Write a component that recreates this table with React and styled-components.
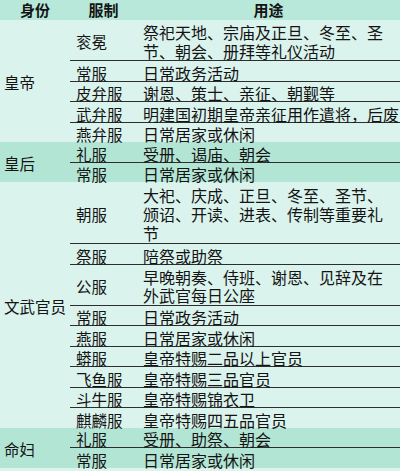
import styled, { createGlobalStyle } from 'styled-components';

const GlobalStyle = createGlobalStyle`
  html, body {
    margin: 0;
    padding: 0;
    background: #dcf3ee;
  }
  body {
    font-family: "Noto Sans CJK SC", "Noto Sans", sans-serif;
    color: #141414;
  }
`;

const Table = styled.div`
  width: 400px;
  height: 471px;
  overflow: hidden;
`;

const Header = styled.div`
  display: grid;
  grid-template-columns: 70px 67px 1fr;
  height: 20px;
  background: #b8e8d9;
  font-size: 15px;
  font-weight: 700;
  line-height: 20px;
  text-align: center;
`;

const Group = styled.div`
  display: flex;
  background: ${(p) => (p.$dark ? '#b3e5d5' : '#dbf3ed')};
`;

const Label = styled.div`
  width: 70px;
  flex-shrink: 0;
  display: flex;
  align-items: center;
  padding: 2px 0 0 4px;
  box-sizing: border-box;
  font-size: 15.5px;
  white-space: nowrap;
`;

const Rows = styled.div`
  flex: 1;
  min-width: 0;
`;

// row spacing per number of text lines, measured from the reference
const spacing = {
  1: { lh: 16, pt: 3.5 },
  2: { lh: 18.5, pt: 3 },
  3: { lh: 19, pt: 4 },
};

const Row = styled.div`
  display: grid;
  grid-template-columns: 67px 1fr;
  border-bottom: 1px solid #2e2e2e;
  padding-top: ${(p) => spacing[p.$lines].pt}px;
  line-height: ${(p) => spacing[p.$lines].lh}px;

  &:last-child {
    border-bottom: none;
  }
`;

const Kind = styled.div`
  display: flex;
  align-items: center;
  padding-left: 6px;
  font-size: 15.5px;
  white-space: nowrap;
`;

const Use = styled.div`
  padding-left: 6px;
  font-size: 16px;
  white-space: nowrap;
`;

const data = [
  {
    who: '皇帝',
    rows: [
      ['衮冕', ['祭祀天地、宗庙及正旦、冬至、圣', '节、朝会、册拜等礼仪活动']],
      ['常服', ['日常政务活动']],
      ['皮弁服', ['谢恩、策士、亲征、朝觐等']],
      ['武弁服', ['明建国初期皇帝亲征用作遣将，后废']],
      ['燕弁服', ['日常居家或休闲']],
    ],
  },
  {
    who: '皇后',
    dark: true,
    rows: [
      ['礼服', ['受册、谒庙、朝会']],
      ['常服', ['日常居家或休闲']],
    ],
  },
  {
    who: '文武官员',
    rows: [
      ['朝服', ['大祀、庆成、正旦、冬至、圣节、', '颁诏、开读、进表、传制等重要礼', '节']],
      ['祭服', ['陪祭或助祭']],
      ['公服', ['早晚朝奏、侍班、谢恩、见辞及在', '外武官每日公座']],
      ['常服', ['日常政务活动']],
      ['燕服', ['日常居家或休闲']],
      ['蟒服', ['皇帝特赐二品以上官员']],
      ['飞鱼服', ['皇帝特赐三品官员']],
      ['斗牛服', ['皇帝特赐锦衣卫']],
      ['麒麟服', ['皇帝特赐四五品官员']],
    ],
  },
  {
    who: '命妇',
    dark: true,
    rows: [
      ['礼服', ['受册、助祭、朝会']],
      ['常服', ['日常居家或休闲']],
    ],
  },
];

const App = () => {
  return (
    <Table>
      <GlobalStyle />
      <Header>
        <div>身份</div>
        <div>服制</div>
        <div>用途</div>
      </Header>
      {data.map((g) => (
        <Group key={g.who} $dark={g.dark}>
          <Label>{g.who}</Label>
          <Rows>
            {g.rows.map(([kind, lines]) => (
              <Row key={kind} $lines={lines.length}>
                <Kind>{kind}</Kind>
                <Use>
                  {lines.map((l, i) => (
                    <div key={i}>{l}</div>
                  ))}
                </Use>
              </Row>
            ))}
          </Rows>
        </Group>
      ))}
    </Table>
  );
};

export default App;
